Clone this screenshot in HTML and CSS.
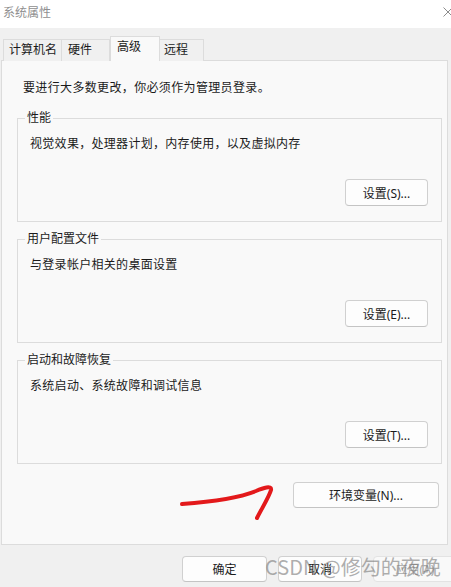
FILE: index.html
```html
<!DOCTYPE html>
<html lang="zh-CN">
<head>
    <meta charset="UTF-8">
    <meta name="viewport" content="width=device-width, initial-scale=1.0">
    <title>系统属性</title>
    <link rel="stylesheet" href="styles.css">
</head>
<body>
    <div class="window">
        <div class="titlebar">
            <span class="title">系统属性</span>
            <svg class="close" width="10" height="10" viewBox="0 0 10 10">
                <path d="M0.5 0.5 L9.5 9.5 M9.5 0.5 L0.5 9.5" stroke="#8c8c8c" stroke-width="1" fill="none"/>
            </svg>
        </div>

        <div class="tabs">
            <div class="tab tab-name">计算机名</div>
            <div class="tab tab-hw">硬件</div>
            <div class="tab tab-adv active">高级</div>
            <div class="tab tab-remote">远程</div>
        </div>

        <div class="panel">
            <p class="note">要进行大多数更改，你必须作为管理员登录。</p>

            <fieldset class="group">
                <legend>性能</legend>
                <p class="desc">视觉效果，处理器计划，内存使用，以及虚拟内存</p>
                <div class="actions">
                    <button class="btn">设置(S)...</button>
                </div>
            </fieldset>

            <fieldset class="group">
                <legend>用户配置文件</legend>
                <p class="desc">与登录帐户相关的桌面设置</p>
                <div class="actions">
                    <button class="btn">设置(E)...</button>
                </div>
            </fieldset>

            <fieldset class="group">
                <legend>启动和故障恢复</legend>
                <p class="desc">系统启动、系统故障和调试信息</p>
                <div class="actions">
                    <button class="btn">设置(T)...</button>
                </div>
            </fieldset>

            <div class="actions">
                <button class="btn btn-env">环境变量(N)...</button>
            </div>
        </div>

        <div class="footer">
            <button class="btn btn-footer">确定</button>
            <button class="btn btn-footer">取消</button>
            <button class="btn btn-footer" disabled>应用(A)</button>
        </div>
    </div>

    <!-- hand drawn annotation + watermark on top of the screenshot -->
    <svg class="scribble" width="451" height="587" viewBox="0 0 451 587">
        <path d="M182 504 C208 502 236 499 256 491 C263 488 272 485 271 490 C269 497 262 508 257 518"
              stroke="#e3191b" stroke-width="4" fill="none" stroke-linecap="round" stroke-linejoin="round"/>
    </svg>
    <div class="watermark">CSDN @修勾的夜晚</div>
</body>
</html>
```

FILE: styles.css
```css
/* Windows "System Properties" dialog */
body {
    margin: 0;
    font-family: "Noto Sans", "Noto Sans CJK SC", sans-serif;
    font-size: 12px;
    color: #1b1b1b;
    background-color: #f0f0f0;
    overflow: hidden;
    position: relative;
    width: 451px;
    height: 587px;
}
.window {
    width: 451px;
}
.titlebar {
    height: 28px;
    background: #fff;
    display: flex;
    justify-content: space-between;
    align-items: flex-start;
    padding-left: 3px;
}
.title {
    color: #8f8f8f;
    line-height: 16px;
    margin-top: 5px;
}
.close {
    margin-top: 7px;
    margin-right: -2px;
}
.tabs {
    display: flex;
    align-items: flex-end;
    height: 24px;
    margin-top: 9px;
    padding-left: 3px;
    position: relative;
    z-index: 1;
    margin-bottom: -1px;
}
.tab {
    box-sizing: border-box;
    height: 22px;
    line-height: 20px;
    padding-left: 5px;
    border: 1px solid #dcdcdc;
    border-bottom: none;
    background: #f0f0f0;
}
.tab + .tab {
    border-left: none;
}
.tab-name { width: 59px; }
.tab-hw { width: 48px; padding-left: 6px; }
.tab-adv { width: 50px; }
.tab-remote { width: 44px; padding-left: 4px; }
.tab.active {
    height: 25px;
    background: #f9f9f9;
    border-left: 1px solid #dcdcdc;
    padding-left: 6px;
    line-height: 20px;
}
.tab.active + .tab {
    border-left: none;
}
.panel {
    box-sizing: border-box;
    height: 485px;
    margin: 0 3px 0 1px;
    padding: 19px 5px 0 15px;
    background: #f9f9f9;
    border: 1px solid #dcdcdc;
}
.note {
    margin: 0 0 14px 6px;
    line-height: 16px;
    letter-spacing: 0.35px;
}
.group {
    margin: 0 0 9px 0;
    padding: 0 13px 15px 12px;
    border: 1px solid #dcdcdc;
    min-inline-size: 0;
}
.group legend {
    margin-left: -5px;
    padding: 0 2px;
    line-height: 16px;
}
.desc {
    margin: 10px 0 0 0;
    line-height: 16px;
    letter-spacing: 0.3px;
}
.actions {
    display: flex;
    justify-content: flex-end;
    margin-top: 27px;
}
.btn {
    box-sizing: border-box;
    width: 83px;
    height: 27px;
    padding: 0;
    font-family: inherit;
    font-size: 12px;
    color: #1b1b1b;
    background: #fdfdfd;
    border: 1px solid #d0d0d0;
    border-bottom-color: #c4c4c4;
    border-radius: 4px;
}
.btn-env {
    width: 146px;
    height: 26px;
    margin-right: 3px;
    margin-top: -9px;
}
.footer {
    display: flex;
    gap: 11px;
    padding: 11px 0 0 182px;
}
.btn-footer {
    width: 85px;
    height: 26px;
    flex: none;
}
.btn-footer + .btn-footer {
    width: 84px;
}
.btn-footer:disabled {
    color: #a8a8a8;
    border-color: #e3e3e3;
    background: #f9f9f9;
}
.scribble {
    position: absolute;
    left: 0;
    top: 0;
    pointer-events: none;
}
.watermark {
    position: absolute;
    left: 265px;
    top: 553px;
    font-family: "Noto Sans CJK SC", sans-serif;
    font-size: 20px;
    line-height: 28px;
    color: rgba(120, 120, 120, 0.6);
    white-space: nowrap;
    pointer-events: none;
}
```
